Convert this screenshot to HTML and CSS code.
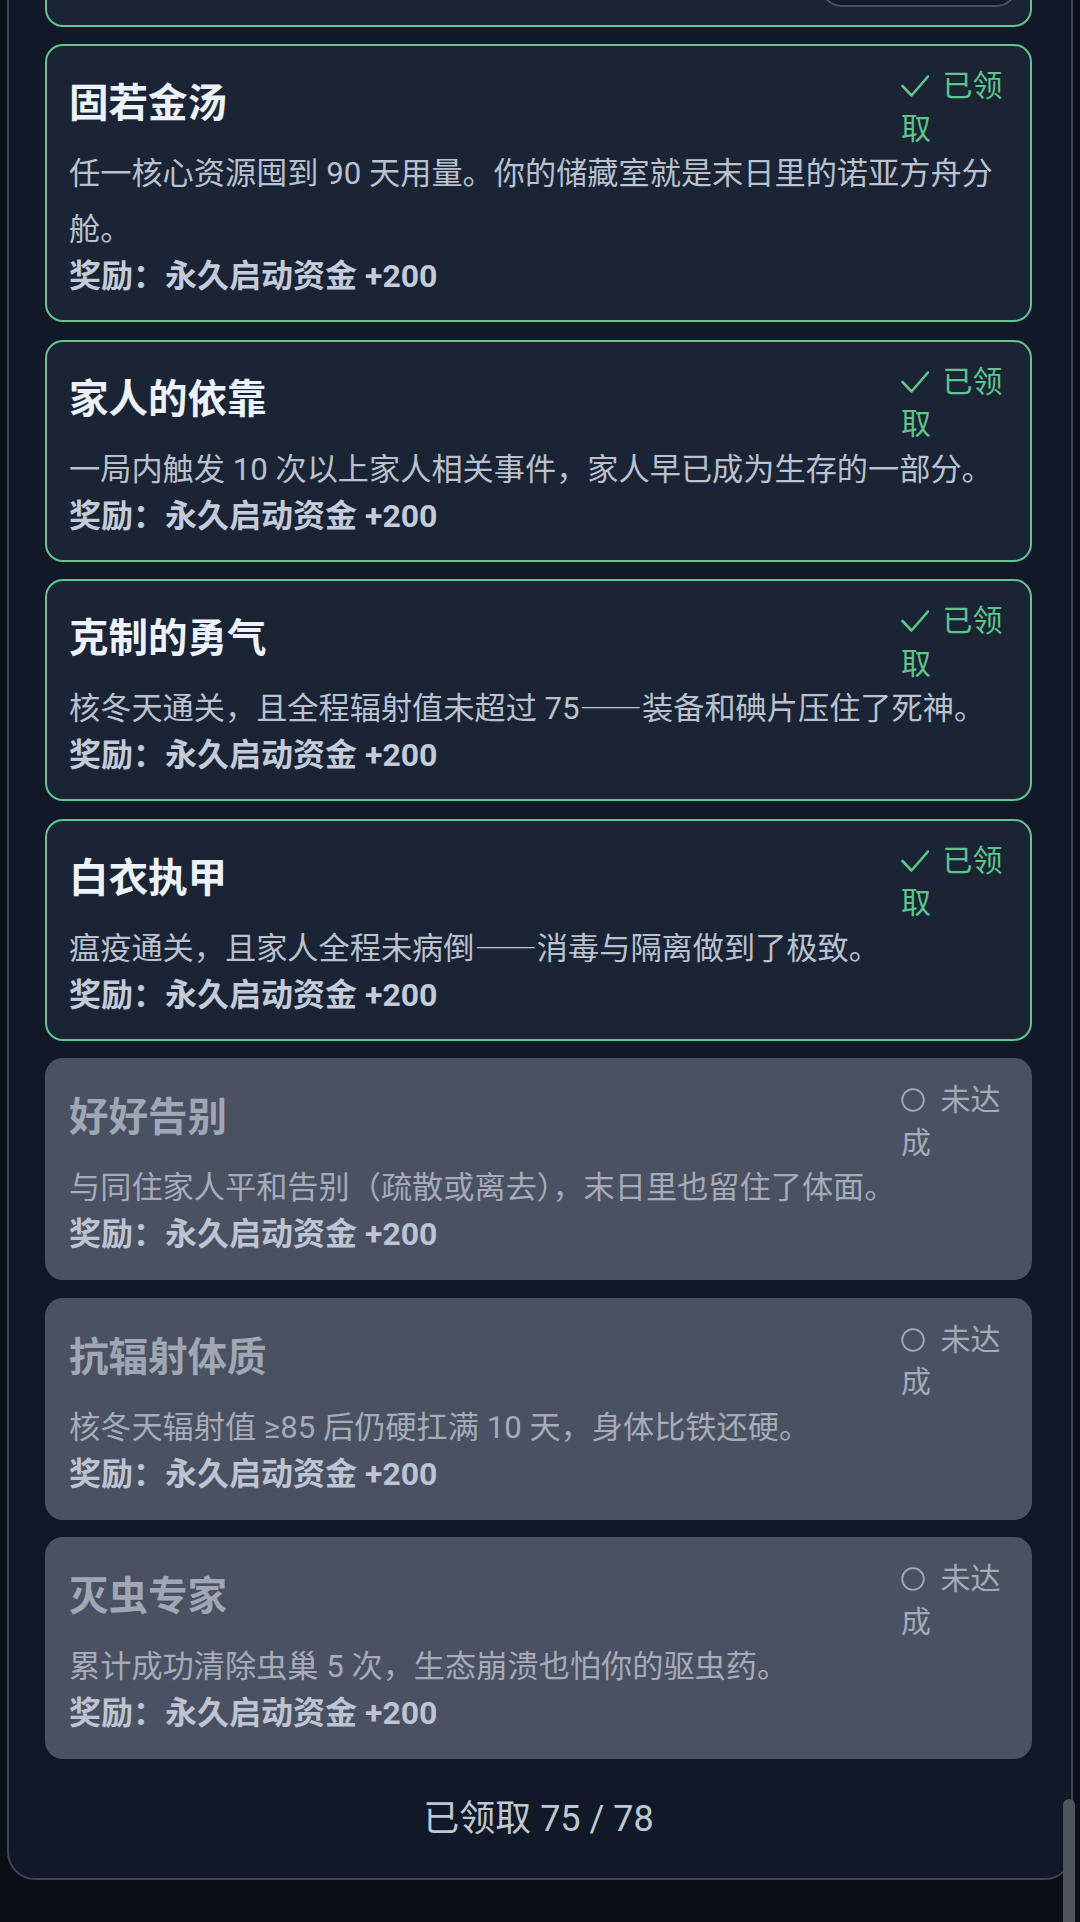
FILE: index.html
```html
<!DOCTYPE html>
<html lang="zh-CN">
<head>
<meta charset="utf-8">
<meta name="viewport" content="width=1080">
<title>成就</title>
<link rel="stylesheet" href="styles.css">
</head>
<body>
<main class="panel">
  <ul class="ach-list">
    <li class="card done stub" aria-hidden="true">
      <div class="card-actions"><span class="btn-claim"></span></div>
    </li>
    <li class="card done">
      <span class="badge"><svg class="ico" viewBox="0 0 28 24" width="28" height="24"><path d="M1.5 12 L10.5 21.5 L27 2.5"/></svg> 已领取</span>
      <h3 class="card-title">固若金汤</h3>
      <p class="card-desc">任一核心资源囤到 90 天用量。你的储藏室就是末日里的诺亚方舟分舱。</p>
      <p class="card-reward">奖励：永久启动资金 +200</p>
    </li>
    <li class="card done">
      <span class="badge"><svg class="ico" viewBox="0 0 28 24" width="28" height="24"><path d="M1.5 12 L10.5 21.5 L27 2.5"/></svg> 已领取</span>
      <h3 class="card-title">家人的依靠</h3>
      <p class="card-desc">一局内触发 10 次以上家人相关事件，家人早已成为生存的一部分。</p>
      <p class="card-reward">奖励：永久启动资金 +200</p>
    </li>
    <li class="card done">
      <span class="badge"><svg class="ico" viewBox="0 0 28 24" width="28" height="24"><path d="M1.5 12 L10.5 21.5 L27 2.5"/></svg> 已领取</span>
      <h3 class="card-title">克制的勇气</h3>
      <p class="card-desc">核冬天通关，且全程辐射值未超过 75<span class="cjk">——</span>装备和碘片压住了死神。</p>
      <p class="card-reward">奖励：永久启动资金 +200</p>
    </li>
    <li class="card done">
      <span class="badge"><svg class="ico" viewBox="0 0 28 24" width="28" height="24"><path d="M1.5 12 L10.5 21.5 L27 2.5"/></svg> 已领取</span>
      <h3 class="card-title">白衣执甲</h3>
      <p class="card-desc">瘟疫通关，且家人全程未病倒<span class="cjk">——</span>消毒与隔离做到了极致。</p>
      <p class="card-reward">奖励：永久启动资金 +200</p>
    </li>
    <li class="card locked">
      <span class="badge"><svg class="ico" viewBox="0 0 26 24" width="26" height="24"><circle cx="12" cy="12" r="10.8"/></svg> 未达成</span>
      <h3 class="card-title">好好告别</h3>
      <p class="card-desc">与同住家人平和告别（疏散或离去），末日里也留住了体面。</p>
      <p class="card-reward">奖励：永久启动资金 +200</p>
    </li>
    <li class="card locked">
      <span class="badge"><svg class="ico" viewBox="0 0 26 24" width="26" height="24"><circle cx="12" cy="12" r="10.8"/></svg> 未达成</span>
      <h3 class="card-title">抗辐射体质</h3>
      <p class="card-desc">核冬天辐射值 ≥85 后仍硬扛满 10 天，身体比铁还硬。</p>
      <p class="card-reward">奖励：永久启动资金 +200</p>
    </li>
    <li class="card locked">
      <span class="badge"><svg class="ico" viewBox="0 0 26 24" width="26" height="24"><circle cx="12" cy="12" r="10.8"/></svg> 未达成</span>
      <h3 class="card-title">灭虫专家</h3>
      <p class="card-desc">累计成功清除虫巢 5 次，生态崩溃也怕你的驱虫药。</p>
      <p class="card-reward">奖励：永久启动资金 +200</p>
    </li>
  </ul>
  <p class="summary">已领取 75 / 78</p>
</main>
<div class="scroll-thumb"></div>
</body>
</html>
```

FILE: styles.css
```css
* {
  box-sizing: border-box;
  margin: 0;
  padding: 0;
}

html,
body {
  height: 100%;
}

body {
  height: 100vh;
  overflow: hidden;
  background: #0a0f17;
  font-family: Roboto, "Noto Sans CJK SC", sans-serif;
  display: flex;
  flex-direction: column;
  justify-content: flex-end;
  padding: 0 7px 42px;
}

.panel {
  flex: none;
  background: #111827;
  border: 2px solid #3d4454;
  border-radius: 28px;
  padding: 20px 39px 31px 36px;
}

.ach-list {
  list-style: none;
  display: flex;
  flex-direction: column;
  gap: 17.5px;
}

.card {
  position: relative;
  background: #1a2435;
  border: 2px solid #63c58e;
  border-radius: 18px;
  padding: 30px 12px 26px 22px;
}

.card-title {
  font-size: 39.5px;
  line-height: 56px;
  font-weight: 700;
  color: #edf2fa;
}

.card-desc {
  margin-top: 14px;
  font-size: 31.2px;
  line-height: 56px;
  color: #b9c1cf;
}

.cjk {
  font-family: "Noto Sans CJK SC", sans-serif;
  line-height: 1;
}

.card-reward {
  font-size: 32px;
  line-height: 36px;
  font-weight: 700;
  color: #c3cad8;
}

.badge {
  position: absolute;
  top: 19px;
  right: 17px;
  width: 112px;
  font-size: 30px;
  line-height: 42.5px;
  color: #5ec48a;
}

.ico {
  vertical-align: -2px;
  margin-right: 6px;
  fill: none;
  stroke: currentColor;
  stroke-width: 2.6;
  stroke-linecap: round;
  stroke-linejoin: round;
}

.locked .ico {
  stroke-width: 1.8;
}

.card.locked {
  background: #4a5162;
  border-color: #4a5162;
}

.locked .card-title {
  color: #a0a7b4;
}

.locked .card-desc {
  color: #a5abb8;
}

.locked .card-reward {
  color: #bdc3d0;
}

.locked .badge {
  color: #a4aab6;
}

.stub {
  padding-top: 120px;
  padding-bottom: 17.5px;
}

.card-actions {
  display: flex;
  justify-content: flex-end;
}

.btn-claim {
  display: block;
  width: 198px;
  height: 62px;
  border: 2px solid #4b5262;
  border-radius: 22px;
  background: #131b2a;
}

.summary {
  margin-top: 33px;
  text-align: center;
  font-size: 36px;
  line-height: 55px;
  color: #c0c7d3;
}

.scroll-thumb {
  position: fixed;
  left: 1063px;
  top: 1799px;
  width: 12px;
  height: 160px;
  border-radius: 6px;
  background: #4f535b;
}
```
